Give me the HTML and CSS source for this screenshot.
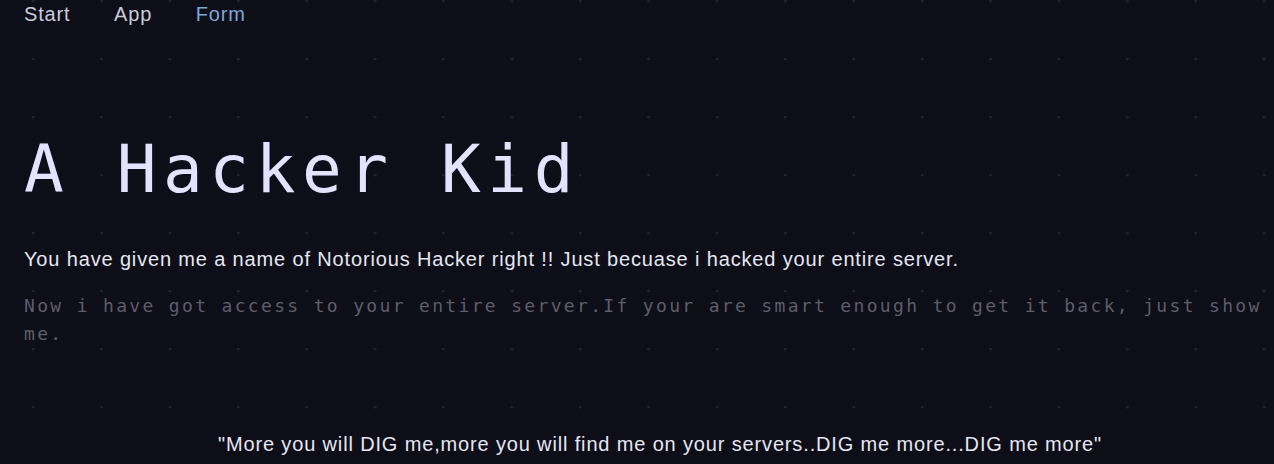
FILE: index.html
```html
<!DOCTYPE html>
<html lang="en">
<head>
<meta charset="utf-8">
<title>A Hacker Kid</title>
<link rel="stylesheet" href="styles.css">
</head>
<body>
<div class="page">
  <nav class="nav">
    <a class="nav-link" href="#">Start</a>
    <a class="nav-link" href="#">App</a>
    <a class="nav-link active" href="#">Form</a>
  </nav>
  <main class="content">
    <h1 class="title">A Hacker Kid</h1>
    <p class="lead">You have given me a name of Notorious Hacker right !! Just becuase i hacked your entire server.</p>
    <p class="mono">Now i have got access to your entire server.If your are smart enough to get it back, just show me.</p>
    <p class="quote">"More you will DIG me,more you will find me on your servers..DIG me more...DIG me more"</p>
  </main>
</div>
</body>
</html>
```
FILE: styles.css
```css
html, body {
  margin: 0;
  padding: 0;
}
body {
  background-color: #0d0e17;
  background-image: radial-gradient(circle at 33px 1px, #22232d 0, #22232d 1.2px, transparent 1.8px);
  background-size: 68.4px 58px;
  background-position: 0 0;
  font-family: "Liberation Sans", Arial, sans-serif;
  letter-spacing: 0.85px;
  color: #e4e4f2;
  min-height: 464px;
}
.page {
  padding: 0 8px 0 24px;
}
.nav {
  display: flex;
  gap: 43.5px;
  height: 28px;
  align-items: center;
}
.nav-link {
  font-size: 20px;
  color: #c9cbd9;
  text-decoration: none;
}
.nav-link.active {
  color: #7ea6d6;
}
.title {
  font-family: "DejaVu Sans Mono", monospace;
  font-weight: normal;
  font-size: 66px;
  letter-spacing: 6.6px;
  color: #e4e2ff;
  margin: 102px 0 0;
  line-height: 80px;
}
.lead {
  font-size: 20px;
  margin: 37px 0 0;
  line-height: 24px;
  color: #e6e6f2;
}
.mono {
  font-family: "DejaVu Sans Mono", monospace;
  font-size: 18px;
  letter-spacing: 2.33px;
  line-height: 28px;
  color: #5e5d69;
  margin: 21px 0 0;
}
.quote {
  text-align: center;
  font-size: 20px;
  padding-left: 30px;
  margin: 84px 0 0;
  line-height: 24px;
  color: #e6e6f2;
}
```
